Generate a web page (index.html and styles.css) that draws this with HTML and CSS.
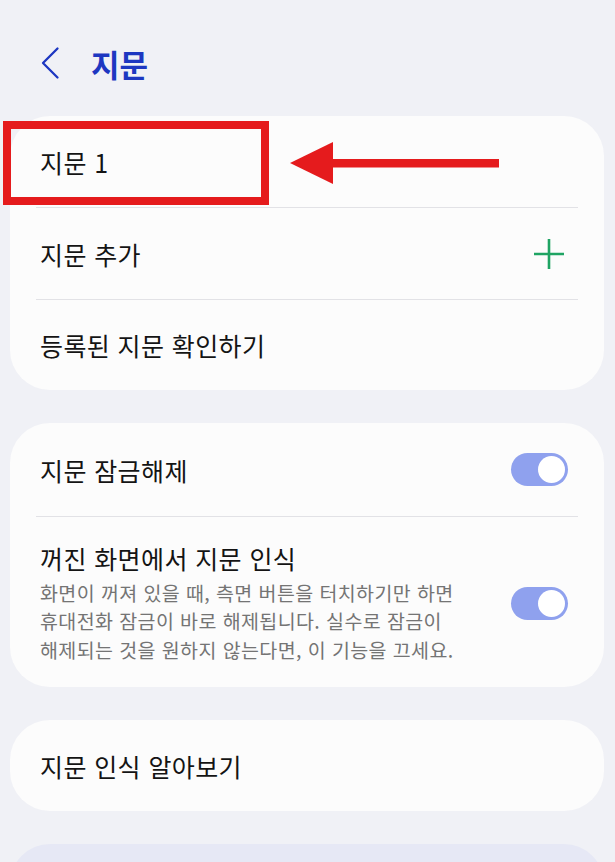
FILE: index.html
```html
<!DOCTYPE html>
<html lang="ko">
<head>
<meta charset="utf-8">
<title>지문</title>
<link rel="stylesheet" href="styles.css">
</head>
<body>
<div class="screen">
  <header class="header">
    <svg class="back" viewBox="0 0 20 34" width="20" height="34">
      <path d="M17.5 2.5 L3 17 L17.5 31.5" fill="none" stroke="#1d37c1" stroke-width="2.3" stroke-linecap="round" stroke-linejoin="round"/>
    </svg>
    <h1 class="title">지문</h1>
  </header>

  <section class="card card-first">
    <div class="row">지문 1</div>
    <div class="divider"></div>
    <div class="row">
      <span>지문 추가</span>
      <svg class="plus" viewBox="0 0 30 30" width="30" height="30">
        <path d="M15 0 V30 M0 15 H30" stroke="#1fa463" stroke-width="2.6" fill="none"/>
      </svg>
    </div>
    <div class="divider"></div>
    <div class="row row-last">등록된 지문 확인하기</div>

    <div class="highlight"></div>
    <svg class="arrow" viewBox="0 0 210 44" width="210" height="44">
      <polygon points="0,21 43,0 43,42" fill="#e51b1d"/>
      <rect x="42" y="17" width="167" height="8.5" fill="#e51b1d"/>
    </svg>
  </section>

  <section class="card">
    <div class="row row-toggle">
      <span>지문 잠금해제</span>
      <span class="toggle"><span class="knob"></span></span>
    </div>
    <div class="divider"></div>
    <div class="row row-desc">
      <div class="text">
        <div class="label">꺼진 화면에서 지문 인식</div>
        <div class="desc">화면이 꺼져 있을 때, 측면 버튼을 터치하기만 하면<br>휴대전화 잠금이 바로 해제됩니다. 실수로 잠금이<br>해제되는 것을 원하지 않는다면, 이 기능을 끄세요.</div>
      </div>
      <span class="toggle"><span class="knob"></span></span>
    </div>
  </section>

  <section class="card">
    <div class="row">지문 인식 알아보기</div>
  </section>

  <section class="card card-next"></section>
</div>
</body>
</html>
```

FILE: styles.css
```css
html, body {
  margin: 0;
  padding: 0;
}
body {
  background: #f0f1f6;
  font-family: "Noto Sans CJK KR", "Noto Sans", sans-serif;
  color: #141414;
}
.screen {
  width: 615px;
  height: 862px;
  overflow: hidden;
}
.header {
  height: 106px;
  padding-top: 10px;
  display: flex;
  align-items: center;
  padding-left: 40px;
  box-sizing: content-box;
}
.back {
  display: block;
}
.title {
  margin: 0 0 0 31px;
  font-size: 31px;
  font-weight: 700;
  color: #1d37c1;
  line-height: 1;
  letter-spacing: 0;
}
.card {
  position: relative;
  margin: 33px 11px 0 10px;
  background: #fcfcfc;
  border-radius: 40px;
}
.card-first {
  margin-top: 0;
}
.row {
  min-height: 91px;
  padding: 0 36px 0 30px;
  display: flex;
  align-items: center;
  justify-content: space-between;
  font-size: 25px;
  letter-spacing: 0.4px;
  box-sizing: border-box;
}
.row-last {
  min-height: 90px;
}
.row-toggle {
  min-height: 93px;
}
.row-desc {
  min-height: 170px;
  padding-top: 2px;
}
.divider {
  height: 1px;
  background: #e2e2e6;
  margin: 0 26px;
}
.plus {
  display: block;
  margin-right: 4px;
}
.label {
  font-size: 25px;
  line-height: 32px;
}
.desc {
  margin-top: 5px;
  font-size: 19.5px;
  line-height: 28.5px;
  color: #747474;
  letter-spacing: 0.4px;
}
.toggle {
  position: relative;
  flex: none;
  width: 57px;
  height: 33px;
  border-radius: 17px;
  background: #8fa1ee;
}
.knob {
  position: absolute;
  top: 3px;
  right: 3px;
  width: 27px;
  height: 27px;
  border-radius: 50%;
  background: #ffffff;
}
.highlight {
  position: absolute;
  left: -7px;
  top: 5px;
  width: 266px;
  height: 84px;
  border: 8px solid #e51b1d;
  box-sizing: border-box;
}
.arrow {
  position: absolute;
  left: 280px;
  top: 26px;
}
.card-next {
  height: 120px;
  background: #e6e8f5;
}
```
